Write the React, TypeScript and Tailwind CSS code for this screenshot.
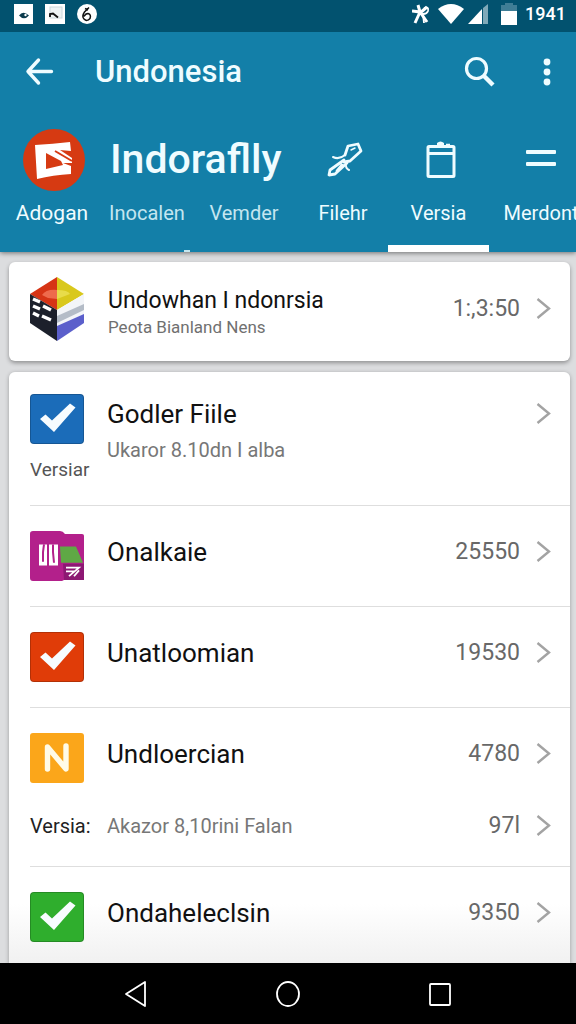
import { type ReactNode, useState } from "react";
import clsx from "clsx";

function Chevron() {
  return (
    <svg
      className="h-6 w-4 shrink-0"
      viewBox="0 0 16 24"
      fill="none"
      stroke="#a3a3a3"
      strokeWidth="2.4"
      aria-hidden="true"
    >
      <path d="M1.500 2 L13 11.500 L1.500 21" />
    </svg>
  );
}

function StatusBar() {
  return (
    <div className="flex h-8 items-center justify-between bg-[#02526f] pr-2.5 pb-1 pl-3.5">
      <div className="flex items-center gap-3">
        <svg className="h-5 w-[19px]" viewBox="0 0 19 20" aria-hidden="true">
          <rect width="19" height="20" fill="#fff" />
          <path d="M5 11.5 Q9 6 15 11.5 Q10 17 5 11.5Z" fill="#0b3a4c" />
          <circle cx="11.5" cy="11" r="1.2" fill="#fff" />
        </svg>
        <svg className="h-5 w-5" viewBox="0 0 20 20" aria-hidden="true">
          <rect width="20" height="20" fill="#fff" />
          <rect x="5" y="3" width="12" height="11" fill="#eef3f4" stroke="#ccd8dc" />
          <path d="M5 13 V10 L8 9.5 L13 13.5" fill="none" stroke="#111" strokeWidth="1.8" />
        </svg>
        <svg className="h-5 w-5" viewBox="0 0 20 20" aria-hidden="true">
          <circle cx="10" cy="10" r="10" fill="#fff" />
          <path
            d="M12 3.5 L7.5 8 Q4.500 12.500 7 15 Q10 18 13 14.500 Q14.500 10.500 11 9.500 Q8.500 9.500 7 12.500 M8 4.500 L11 6"
            fill="none"
            stroke="#111"
            strokeWidth="1.5"
          />
        </svg>
      </div>
      <div className="flex items-center gap-2">
        <svg className="h-5 w-[18px]" viewBox="0 0 18 20" fill="none" stroke="#fff" aria-hidden="true">
          <path d="M6 1 L8 8 L3 19 M0 7 L8 8 L15 18 M8 9 L15 3" strokeWidth="3" />
          <path d="M12 4 Q17 2 16 7 Q15 10 11 10 L12 19" strokeWidth="1.800" />
        </svg>
        <svg className="h-5 w-[26px]" viewBox="0 0 26 20" aria-hidden="true">
          <path d="M0 5 Q13 -5 26 5 L13 20Z" fill="#fff" />
        </svg>
        <svg className="-ml-1 h-5 w-[21px]" viewBox="0 0 21 20" aria-hidden="true">
          <path d="M0 20 L14 5 V20Z" fill="#fff" />
          <path d="M15 4 L20 0 V20 H15Z" fill="#7fa9b8" />
        </svg>
        <svg className="ml-1 h-[22px] w-4" viewBox="0 0 16 22" aria-hidden="true">
          <path d="M4 0 H12 V2 H16 V8 H0 V2 H4Z" fill="#3f7d95" />
          <rect y="8" width="16" height="14" fill="#fff" />
        </svg>
        <span className="text-lg leading-5 font-medium text-white">1941</span>
      </div>
    </div>
  );
}

function Toolbar() {
  return (
    <div className="flex h-20 items-center pr-[17px] pl-6">
      <button type="button" aria-label="Back" className="shrink-0">
        <svg
          className="h-8 w-8"
          viewBox="0 0 32 32"
          fill="none"
          stroke="#effcff"
          strokeWidth="3.4"
          strokeLinecap="round"
          strokeLinejoin="round"
        >
          <path d="M14.500 4 L4 15.500 L14.500 27 M4 15.500 H27.500" />
        </svg>
      </button>
      <h1 className="ml-[39px] flex-1 text-[31px] leading-10 font-medium">Undonesia</h1>
      <button type="button" aria-label="Search" className="mr-10">
        <svg className="h-8 w-8" viewBox="0 0 32 32" fill="none" stroke="#effcff">
          <circle cx="13.500" cy="12.500" r="10" strokeWidth="3.2" />
          <path d="M20.500 19.500 L30 29" strokeWidth="4.4" />
        </svg>
      </button>
      <button type="button" aria-label="More options" className="flex w-6 justify-center">
        <svg className="h-7 w-2" viewBox="0 0 8 28" fill="#effcff">
          <circle cx="4" cy="4" r="3.400" />
          <circle cx="4" cy="14" r="3.400" />
          <circle cx="4" cy="24" r="3.400" />
        </svg>
      </button>
    </div>
  );
}

interface IconTabProps {
  label: string;
  icon: ReactNode;
  active?: boolean;
  onSelect: (label: string) => void;
}

function IconTab({ label, icon, active, onSelect }: IconTabProps) {
  return (
    <button
      type="button"
      aria-pressed={active}
      onClick={() => onSelect(label)}
      className={clsx(
        "row-span-2 flex flex-col items-center border-b-[7px]",
        active ? "border-white" : "border-transparent"
      )}
    >
      <span className="flex h-[85px] items-center pt-2.5">{icon}</span>
      <span className="text-xl leading-8">{label}</span>
    </button>
  );
}

function TabStrip() {
  const [tab, setTab] = useState("Versia");

  return (
    <nav className="grid grid-cols-[104px_86px_108px_90px_101px_104px] grid-rows-[85px_55px] overflow-hidden">
      <div className="flex items-center justify-center pt-2.5 pl-1">
        <svg className="h-[62px] w-[62px]" viewBox="0 0 62 62" aria-hidden="true">
          <circle cx="31" cy="31" r="31" fill="#d63a12" />
          <path
            fill="#fff"
            d="M12 16 Q30 15 47 13 L48 22 L37 21 L49 29 V34 L40 34 L48 37 V45 Q30 46 14 50Z"
          />
          <path d="M23 24 L38 32 L40 36 L23 40Z" fill="#d63a12" />
          <path d="M32 22 L49 32" stroke="#d63a12" strokeWidth="2" fill="none" />
        </svg>
      </div>
      <p className="col-span-2 flex items-center pt-2.5 pl-1.5 text-[41px] leading-none font-medium">
        Indoraflly
      </p>
      <IconTab
        label="Filehr"
        onSelect={setTab}
        active={tab === "Filehr"}
        icon={
          <svg
            className="ml-1 h-9 w-9"
            viewBox="0 0 36 36"
            fill="none"
            stroke="#effcff"
            strokeWidth="2.800"
            strokeLinejoin="round"
            strokeLinecap="round"
          >
            <path d="M18 13 L21 4 L31 2 L34 9 L23 19 L17 20" />
            <path d="M17 18 L3 28 L2 33 L8 32 L20 21 M10 29 L15 23" />
            <path d="M6 15 Q12 18 18 13 M19 21 Q18 26 22 28" strokeWidth="2" />
            <path d="M24 8 L28 6" strokeWidth="1.500" />
          </svg>
        }
      />
      <IconTab
        label="Versia"
        onSelect={setTab}
        active={tab === "Versia"}
        icon={
          <svg
            className="ml-1 h-10 w-[30px]"
            viewBox="0 0 30 40"
            fill="none"
            stroke="#effcff"
            strokeWidth="3"
          >
            <rect x="2" y="6.500" width="26" height="30" rx="1" />
            <path d="M2 13.500 H28" />
            <path d="M11 6 V3 Q14.500 0 18 3 V6Z" fill="#effcff" stroke="none" />
            <path d="M20 4.500 H24" strokeWidth="1.500" />
          </svg>
        }
      />
      <IconTab
        label="Merdont"
        onSelect={setTab}
        active={tab === "Merdont"}
        icon={
          <svg className="h-5 w-[30px]" viewBox="0 0 30 20" fill="#effcff">
            <rect width="30" height="4" rx="1" />
            <rect y="12" width="30" height="4" rx="1" />
          </svg>
        }
      />
      <button type="button" onClick={() => setTab("Adogan")} className="flex justify-center text-[21px] leading-8">
        Adogan
      </button>
      <button
        type="button"
        onClick={() => setTab("Inocalen")}
        className="flex flex-col items-center justify-between text-xl leading-8 text-[#c4e6f0]"
      >
        Inocalen
        <span className="h-0.5 w-1.5 self-end bg-[#c4e6f0]" />
      </button>
      <button
        type="button"
        onClick={() => setTab("Vemder")}
        className="flex justify-center text-xl leading-8 text-[#c4e6f0]"
      >
        Vemder
      </button>
    </nav>
  );
}

interface CheckTileProps {
  id: string;
  color: string;
}

function CheckTile({ id, color }: CheckTileProps) {
  return (
    <span className="relative block h-[50px] w-[54px]">
      <input
        id={id}
        type="checkbox"
        defaultChecked
        className={clsx("peer block h-full w-full appearance-none rounded-sm border border-black/20", color)}
      />
      <svg
        className="pointer-events-none absolute inset-0 hidden h-full w-full peer-checked:block"
        viewBox="0 0 54 50"
        fill="#f7fcff"
      >
        <path d="M10 25 L15.500 20.500 L22 26.500 L40 9.500 L45.500 13.500 L24 38Z" />
      </svg>
    </span>
  );
}

function CubeLogo() {
  return (
    <svg className="h-16 w-[54px]" viewBox="0 0 54 64" aria-hidden="true">
      <path d="M27 0 L0 17 L27 33Z" fill="#d63415" />
      <path d="M27 0 L54 17 L27 33Z" fill="#d9c81c" />
      <path d="M12 18 Q16 12 27 13 V22 L18 21Z" fill="#ee6a4c" />
      <path d="M27 13 Q38 13 40 17 L27 22Z" fill="#e8dc4a" />
      <path d="M0 17 L27 33 V64 L0 46Z" fill="#1c202b" />
      <path d="M27 33 L54 17 V46 L27 64Z" fill="#f3f5f8" />
      <path d="M27 39 L54 27 V33 L27 46Z" fill="#b4bcc7" />
      <path d="M27 49 L54 37 V46 L27 64Z" fill="#5b5fcb" />
      <path
        d="M3 22 L10 25 M13 29 L21 33 M3 29 L10 32 M3 36 L9 39 M12 39 L21 43"
        stroke="#fff"
        strokeWidth="3.400"
      />
    </svg>
  );
}

function FolderLogo() {
  return (
    <svg className="h-[50px] w-[54px]" viewBox="0 0 54 52" preserveAspectRatio="none" aria-hidden="true">
      <path
        d="M3 0 H30 Q33 0 35 3 H52 Q54 3 54 5 V49 Q54 51 52 51 H34 L32 52 H3 Q0 52 0 49 V3 Q0 0 3 0Z"
        fill="#b3208b"
      />
      <path d="M33 34 H54 V51 H34Z" fill="#8d1873" />
      <path d="M30 16 H46 L53 33 H31Z" fill="#5fa845" />
      <path d="M9 14 H17 V36 H9Z M19 14 H28 V36 H19Z" fill="#fff" />
      <path d="M14 14 L13 22 V32 M23 14 V22 L24 33" stroke="#b3208b" strokeWidth="2" fill="none" />
      <path d="M36 38 H49 L39 47 M36 42 H45 M44 47 L49 41" stroke="#fff" strokeWidth="1.800" fill="none" />
    </svg>
  );
}

function LetterTile() {
  return (
    <svg className="h-[50px] w-[54px]" viewBox="0 0 54 50" aria-hidden="true">
      <rect width="54" height="50" rx="3" fill="#fba61a" />
      <path
        d="M17.500 36 V14 L36 36 V13"
        fill="none"
        stroke="#fffbe8"
        strokeWidth="5.400"
        strokeLinecap="round"
        strokeLinejoin="round"
      />
    </svg>
  );
}

function DetailLink({ name, count }: { name: string; count?: string }) {
  return (
    <a href="#" aria-label={name} className="flex items-center gap-4 text-[23px] leading-8 text-[#686868]">
      {count}
      <Chevron />
    </a>
  );
}

interface RowProps {
  id: string;
  title: string;
  count: string;
  color?: string;
  icon?: ReactNode;
}

function Row({ id, title, count, color, icon }: RowProps) {
  const titleStyle = "flex-1 pb-2 pl-[23px] text-[26px] leading-8 text-[#111]";

  return (
    <div className="flex items-center pt-[25px] pr-[18px] pb-[25px] last:pb-[21px]">
      {color ? <CheckTile id={id} color={color} /> : icon}
      {color ? (
        <label htmlFor={id} className={titleStyle}>{title}</label>
      ) : (
        <p className={titleStyle}>{title}</p>
      )}
      <div className="pb-2">
        <DetailLink name={title} count={count} />
      </div>
    </div>
  );
}

export default function App() {
  return (
    <div className="flex min-h-screen flex-col bg-[#dcdddf] font-['Roboto','Liberation_Sans',sans-serif]">
      <header className="relative bg-[#137fa8] text-[#effcff] shadow-[0_1px_5px_rgba(0,0,0,0.5)]">
        <StatusBar />
        <Toolbar />
        <TabStrip />
      </header>

      <main className="flex flex-1 flex-col gap-[11px] pt-2.5 pr-1.5 pl-[9px]">
        <section className="flex h-[99px] items-center rounded-md bg-white pr-[18px] pb-1.5 pl-[21px] shadow-[0_2px_4px_rgba(0,0,0,0.35)]">
          <CubeLogo />
          <div className="flex-1 pt-2 pl-6">
            <h2 className="text-[23px] leading-7 text-[#111]">Undowhan I ndonrsia</h2>
            <p className="text-[17px] leading-6 text-[#707070]">Peota Bianland Nens</p>
          </div>
          <DetailLink name="Undowhan" count="1:,3:50" />
        </section>

        <section className="flex-1 divide-y divide-[#dedede] rounded-t-md bg-linear-to-b from-white from-90% to-[#f1f1f1] pl-[21px] shadow-[0_1px_4px_rgba(0,0,0,0.3)]">
          <div className="flex items-start pt-[22px] pr-[18px] pb-[19px]">
            <div className="w-[54px]">
              <CheckTile id="godler" color="bg-[#1b6cb9]" />
              <p className="pt-2.5 text-[19px] leading-8 text-[#555]">Versiar</p>
            </div>
            <div className="flex-1 pt-1 pl-[23px]">
              <label htmlFor="godler" className="block text-[26px] leading-8 text-[#111]">
                Godler Fiile
              </label>
              <p className="pt-1 text-xl leading-8 text-[#777]">Ukaror 8.10dn I alba</p>
            </div>
            <div className="pt-2">
              <DetailLink name="Godler Fiile" />
            </div>
          </div>

          <Row id="onalkaie" title="Onalkaie" count="25550" icon={<FolderLogo />} />
          <Row id="unatloomian" title="Unatloomian" count="19530" color="bg-[#e03c08]" />

          <div>
            <div className="flex items-center pt-[25px] pr-[18px] pb-[25px]">
              <LetterTile />
              <p className="flex-1 pb-2 pl-[23px] text-[26px] leading-8 text-[#111]">Undloercian</p>
              <div className="pb-2">
                <DetailLink name="Undloercian" count="4780" />
              </div>
            </div>
            <div className="flex items-start pt-0.5 pr-[18px] pb-6 text-xl leading-8">
              <span className="w-[77px] text-[#222]">Versia:</span>
              <p className="flex-1 text-[#777]">Akazor 8,10rini Falan</p>
              <DetailLink name="Versia" count="97l" />
            </div>
          </div>

          <Row id="ondaheleclsin" title="Ondaheleclsin" count="9350" color="bg-[#2fae2d]" />
        </section>
      </main>

      <footer className="sticky bottom-0 flex h-[61px] shrink-0 items-center justify-center gap-32 bg-black">
        <button type="button" aria-label="Back">
          <svg className="h-7 w-6" viewBox="0 0 24 28" fill="none" stroke="#fff" strokeWidth="1.800" strokeLinejoin="round">
            <path d="M21 2 V26 L2 14Z" />
          </svg>
        </button>
        <button type="button" aria-label="Home">
          <svg className="h-7 w-6" viewBox="0 0 24 28" fill="none" stroke="#fff" strokeWidth="1.800">
            <ellipse cx="12" cy="14" rx="11" ry="12" />
          </svg>
        </button>
        <button type="button" aria-label="Recent apps">
          <svg className="h-7 w-6" viewBox="0 0 24 28" fill="none" stroke="#fff" strokeWidth="1.800">
            <rect x="2" y="4" width="20" height="21" rx="1" />
          </svg>
        </button>
      </footer>
    </div>
  );
}
